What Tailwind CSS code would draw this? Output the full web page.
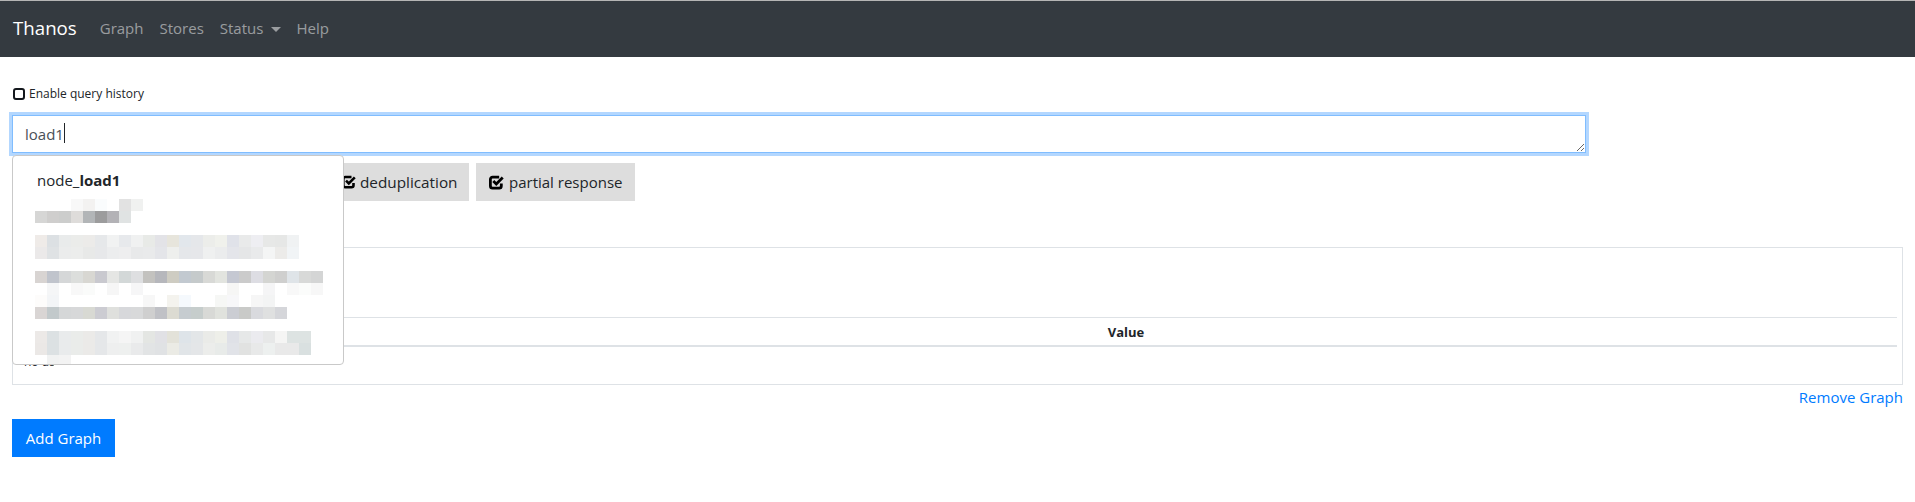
<!DOCTYPE html>
<html lang="en">

<head>
   <meta charset="UTF-8">
   <title>Thanos</title>
   <script src="https://cdn.jsdelivr.net/npm/@tailwindcss/browser@4"></script>
</head>

<body class="bg-white text-[#212529] font-['Open_Sans','Noto_Sans',sans-serif] overflow-hidden">
   <!-- Navbar -->
   <nav class="h-[57px] border-t border-[#b5b5b5] bg-[#343a40] flex items-center pl-[13px] pb-[1px]">
      <a class="text-white text-[18.7px] mr-[23px]">Thanos</a>
      <a class="text-white/50 text-[15px] mr-[16px]">Graph</a>
      <a class="text-white/50 text-[15px] mr-[16px]">Stores</a>
      <a class="text-white/50 text-[15px] mr-[15px] flex items-center">Status
         <span class="ml-[8px] mt-[1px] border-x-[5px] border-x-transparent border-t-[5px] border-t-white/50"></span>
      </a>
      <a class="text-white/50 text-[15px]">Help</a>
   </nav>

   <div class="pl-[12px] pr-[13px]">
      <!-- Query history -->
      <label class="h-[58px] flex items-center pt-[16px] pl-[1px] text-[12px] leading-none">
         <span class="w-[12px] h-[12px] rounded-[3px] border-2 border-[#14181d] mr-[4px]"></span>
         Enable query history
      </label>

      <!-- Expression -->
      <div class="relative w-[1574px]">
         <textarea rows="1"
            class="block w-full h-[38px] resize-y border border-[#80bdff] ring-[3px] ring-[#b3d7ff] outline-none px-[12px] py-[6px] text-[15px] leading-[24px] text-[#495057]">load1</textarea>
         <span class="absolute left-[52px] top-[8px] w-px h-[20px] bg-[#212529]"></span>

         <!-- Autocomplete -->
         <div class="absolute left-0 top-[40px] z-10 w-[332px] h-[210px] bg-white border border-[#c9c9c9] rounded-[4px] pt-[12px] overflow-hidden">
            <p class="pl-[24px] text-[15px] leading-[24px] h-[31px]">node_<b>load1</b></p>

            <div class="pl-[22px]">
               <div class="flex h-[12px] ml-[24px]">
                  <i class="w-[12px]"></i><i class="w-[12px] bg-[#f8f8f8]"></i><i class="w-[12px] bg-[#f3f2f1]"></i><i class="w-[12px] bg-[#fafcfd]"></i><i class="w-[12px]"></i><i class="w-[12px] bg-[#e2e2e2]"></i><i class="w-[12px] bg-[#f0f1f0]"></i>
               </div>
               <div class="flex h-[12px]">
                  <i class="w-[12px] bg-[#d6d6d5]"></i><i class="w-[12px] bg-[#cfcecd]"></i><i class="w-[12px] bg-[#cccdcc]"></i><i class="w-[12px] bg-[#dedcda]"></i><i class="w-[12px] bg-[#b2b5b7]"></i><i class="w-[12px] bg-[#9c9c9d]"></i><i class="w-[12px] bg-[#b3b2b6]"></i><i class="w-[12px] bg-[#e0e3e3]"></i>
               </div>

               <div class="flex h-[12px] mt-[12px]">
                  <i class="w-[12px] bg-[#efebe8]"></i><i class="w-[12px] bg-[#dce0e3]"></i><i class="w-[12px] bg-[#e9ebeb]"></i><i class="w-[12px] bg-[#ebecea]"></i><i class="w-[12px] bg-[#ecebe9]"></i><i class="w-[12px] bg-[#e6e8ea]"></i><i class="w-[12px] bg-[#f1f2f2]"></i><i class="w-[12px] bg-[#e7e9ec]"></i><i class="w-[12px] bg-[#f0f1f1]"></i><i class="w-[12px] bg-[#e8eae7]"></i><i class="w-[12px] bg-[#e3e3e7]"></i><i class="w-[12px] bg-[#e7e5dc]"></i><i class="w-[12px] bg-[#e2e7ec]"></i><i class="w-[12px] bg-[#e5e7ea]"></i><i class="w-[12px] bg-[#ecedea]"></i><i class="w-[12px] bg-[#f0f1ec]"></i><i class="w-[12px] bg-[#e0e2e9]"></i><i class="w-[12px] bg-[#e9eaea]"></i><i class="w-[12px] bg-[#eeeef2]"></i><i class="w-[12px] bg-[#e7e8e7]"></i><i class="w-[12px] bg-[#e6e7e6]"></i><i class="w-[12px] bg-[#f0f2f3]"></i>
               </div>
               <div class="flex h-[12px]">
                  <i class="w-[12px] bg-[#ebe9e9]"></i><i class="w-[12px] bg-[#dfe2e4]"></i><i class="w-[12px] bg-[#ebecec]"></i><i class="w-[12px] bg-[#ecedec]"></i><i class="w-[12px] bg-[#e8e9e8]"></i><i class="w-[12px] bg-[#e7e8ea]"></i><i class="w-[12px] bg-[#ecedee]"></i><i class="w-[12px] bg-[#eeeeef]"></i><i class="w-[12px] bg-[#e8e9ea]"></i><i class="w-[12px] bg-[#e9eaeb]"></i><i class="w-[12px] bg-[#e4e5e9]"></i><i class="w-[12px] bg-[#eeefed]"></i><i class="w-[12px] bg-[#e5e7ea]"></i><i class="w-[12px] bg-[#e6e7ea]"></i><i class="w-[12px] bg-[#eff0f0]"></i><i class="w-[12px] bg-[#ebeced]"></i><i class="w-[12px] bg-[#e4e5ea]"></i><i class="w-[12px] bg-[#e5e6e7]"></i><i class="w-[12px] bg-[#e9eaeb]"></i><i class="w-[12px] bg-[#f4f5f5]"></i><i class="w-[12px] bg-[#ecebe9]"></i><i class="w-[12px] bg-[#f1f4f6]"></i>
               </div>

               <div class="flex h-[12px] mt-[12px]">
                  <i class="w-[12px] bg-[#d8d4d2]"></i><i class="w-[12px] bg-[#c0c4cc]"></i><i class="w-[12px] bg-[#d5d7d8]"></i><i class="w-[12px] bg-[#dcdedc]"></i><i class="w-[12px] bg-[#d8d7d2]"></i><i class="w-[12px] bg-[#c9c9cf]"></i><i class="w-[12px] bg-[#e5e6e4]"></i><i class="w-[12px] bg-[#d3d8d8]"></i><i class="w-[12px] bg-[#dedfe1]"></i><i class="w-[12px] bg-[#c3c2bf]"></i><i class="w-[12px] bg-[#b6b7bc]"></i><i class="w-[12px] bg-[#ceccc2]"></i><i class="w-[12px] bg-[#c2c9d0]"></i><i class="w-[12px] bg-[#c5cacb]"></i><i class="w-[12px] bg-[#d8d9d6]"></i><i class="w-[12px] bg-[#e2e4df]"></i><i class="w-[12px] bg-[#c5c8d2]"></i><i class="w-[12px] bg-[#cbcbcb]"></i><i class="w-[12px] bg-[#dddde3]"></i><i class="w-[12px] bg-[#d4d5d2]"></i><i class="w-[12px] bg-[#cfcfce]"></i><i class="w-[12px] bg-[#dfe4e8]"></i><i class="w-[12px] bg-[#d8d9d8]"></i><i class="w-[12px] bg-[#d4d5d5]"></i>
               </div>
               <div class="flex h-[12px]">
                  <i class="w-[12px]"></i><i class="w-[12px] bg-[#f5f6f7]"></i><i class="w-[12px]"></i><i class="w-[12px] bg-[#f8f8f8]"></i><i class="w-[12px] bg-[#fafbfa]"></i><i class="w-[12px]"></i><i class="w-[12px] bg-[#f6f6f6]"></i><i class="w-[12px]"></i><i class="w-[12px] bg-[#f6f6f7]"></i><i class="w-[84px]"></i><i class="w-[12px] bg-[#f6f6f5]"></i><i class="w-[24px]"></i><i class="w-[12px] bg-[#f5f5f6]"></i><i class="w-[12px]"></i><i class="w-[12px] bg-[#f8f8f8]"></i><i class="w-[12px] bg-[#fbfcfb]"></i><i class="w-[12px] bg-[#f7f7f7]"></i>
               </div>
               <div class="flex h-[12px]">
                  <i class="w-[12px] bg-[#fdfcfb]"></i><i class="w-[12px] bg-[#f3f5f7]"></i><i class="w-[84px]"></i><i class="w-[12px] bg-[#f7f7f7]"></i><i class="w-[12px]"></i><i class="w-[12px] bg-[#f4f3ee]"></i><i class="w-[12px] bg-[#f5f9fd]"></i><i class="w-[24px]"></i><i class="w-[12px] bg-[#f6f7f5]"></i><i class="w-[12px] bg-[#f7f7f9]"></i><i class="w-[12px]"></i><i class="w-[12px] bg-[#f6f6f6]"></i><i class="w-[12px] bg-[#f3f4f4]"></i>
               </div>
               <div class="flex h-[12px]">
                  <i class="w-[12px] bg-[#d9d5d4]"></i><i class="w-[12px] bg-[#c2c9cb]"></i><i class="w-[12px] bg-[#d5d7d8]"></i><i class="w-[12px] bg-[#d7d8d9]"></i><i class="w-[12px] bg-[#d8d9d3]"></i><i class="w-[12px] bg-[#ccccd2]"></i><i class="w-[12px] bg-[#dfe0dd]"></i><i class="w-[12px] bg-[#d7d8db]"></i><i class="w-[12px] bg-[#d8d9da]"></i><i class="w-[12px] bg-[#cfcfcf]"></i><i class="w-[12px] bg-[#c0c1c6]"></i><i class="w-[12px] bg-[#dcdbd2]"></i><i class="w-[12px] bg-[#c6ccd0]"></i><i class="w-[12px] bg-[#c6cdcc]"></i><i class="w-[12px] bg-[#d8d9d6]"></i><i class="w-[12px] bg-[#e0e2dd]"></i><i class="w-[12px] bg-[#cbcdd3]"></i><i class="w-[12px] bg-[#c9cac8]"></i><i class="w-[12px] bg-[#d9dade]"></i><i class="w-[12px] bg-[#dfe0e0]"></i><i class="w-[12px] bg-[#d5d6da]"></i>
               </div>

               <div class="flex h-[12px] mt-[12px]">
                  <i class="w-[12px] bg-[#ece9e7]"></i><i class="w-[12px] bg-[#dce1e3]"></i><i class="w-[12px] bg-[#e9ebec]"></i><i class="w-[12px] bg-[#eaecea]"></i><i class="w-[12px] bg-[#ebeae8]"></i><i class="w-[12px] bg-[#e5e7e9]"></i><i class="w-[12px] bg-[#f1f2f2]"></i><i class="w-[12px] bg-[#f5f5f5]"></i><i class="w-[12px] bg-[#f0f1f1]"></i><i class="w-[12px] bg-[#e4e6e3]"></i><i class="w-[12px] bg-[#e1e1e5]"></i><i class="w-[12px] bg-[#e3e2d9]"></i><i class="w-[12px] bg-[#dee4e9]"></i><i class="w-[12px] bg-[#e3e6e8]"></i><i class="w-[12px] bg-[#eaebe8]"></i><i class="w-[12px] bg-[#eeefe9]"></i><i class="w-[12px] bg-[#dfe1e7]"></i><i class="w-[12px] bg-[#e6e8e8]"></i><i class="w-[12px] bg-[#ebebef]"></i><i class="w-[12px] bg-[#e7e8e8]"></i><i class="w-[12px] bg-[#f5f5f4]"></i><i class="w-[12px] bg-[#dde3e2]"></i><i class="w-[12px] bg-[#dde3e2]"></i>
               </div>
               <div class="flex h-[12px]">
                  <i class="w-[12px] bg-[#ebe8e6]"></i><i class="w-[12px] bg-[#dce1e3]"></i><i class="w-[12px] bg-[#e9ebec]"></i><i class="w-[12px] bg-[#eaecea]"></i><i class="w-[12px] bg-[#ebeae8]"></i><i class="w-[12px] bg-[#e5e7e9]"></i><i class="w-[12px] bg-[#eeefef]"></i><i class="w-[12px] bg-[#eef0ef]"></i><i class="w-[12px] bg-[#e9eaeb]"></i><i class="w-[12px] bg-[#e2e4e5]"></i><i class="w-[12px] bg-[#e0e2e4]"></i><i class="w-[12px] bg-[#ebebe5]"></i><i class="w-[12px] bg-[#e1e5e8]"></i><i class="w-[12px] bg-[#e4e6e8]"></i><i class="w-[12px] bg-[#ecedeb]"></i><i class="w-[12px] bg-[#e8ebe9]"></i><i class="w-[12px] bg-[#e1e3e8]"></i><i class="w-[12px] bg-[#e1e2e1]"></i><i class="w-[12px] bg-[#e8e9e9]"></i><i class="w-[12px] bg-[#edf0ef]"></i><i class="w-[12px] bg-[#e9e9e9]"></i><i class="w-[12px] bg-[#e9e9e9]"></i><i class="w-[12px] bg-[#d9e0e0]"></i>
               </div>
               <div class="flex h-[10px] ml-[12px]">
                  <i class="w-[12px] bg-[#f1f2f2]"></i><i class="w-[12px] bg-[#f3f3f3]"></i>
               </div>
            </div>
         </div>
      </div>

      <!-- Execute row -->
      <div class="flex gap-[7px] mt-[10px] h-[38px]">
         <button class="w-[317px] bg-[#007bff] text-white text-[15px]">Execute</button>
         <button class="w-[133px] bg-[#ddd] text-[15.3px] flex items-center pl-[6px] whitespace-nowrap">
            <svg class="w-[14px] h-[14px] mr-[4px] shrink-0" viewBox="0 0 14 14" fill="none" stroke="#000" stroke-width="2.6">
               <path d="M11.5 8v2.2a2 2 0 0 1-2 2H3.3a2 2 0 0 1-2-2V4a2 2 0 0 1 2-2h6.2" />
               <path d="M4 5.6l2.8 2.8 6-6" />
            </svg>deduplication</button>
         <button class="w-[159px] bg-[#ddd] text-[15px] flex items-center pl-[13px] whitespace-nowrap">
            <svg class="w-[15px] h-[15px] mr-[5px] shrink-0" viewBox="0 0 14 14" fill="none" stroke="#000" stroke-width="2.6">
               <path d="M11.5 8v2.2a2 2 0 0 1-2 2H3.3a2 2 0 0 1-2-2V4a2 2 0 0 1 2-2h6.2" />
               <path d="M4 5.6l2.8 2.8 6-6" />
            </svg>partial response</button>
      </div>

      <!-- Graph panel -->
      <div class="relative mt-[46px] w-[1891px] h-[138px] border border-[#dee2e6] px-[5px] pt-[69px]">
         <div class="h-[30px] border-t border-b-2 border-[#dee2e6] grid grid-cols-[337px_1fr] items-center pt-[2px] text-[13px] font-bold">
            <span>Element</span>
            <span class="text-center">Value</span>
         </div>
         <p class="pl-[6px] pt-[6px] text-[12px] leading-[18px]">no data</p>
         <span class="absolute left-[41px] top-[112px] w-[24px] h-[12px] bg-white"></span>
      </div>
      <div class="w-[1891px] text-right text-[#007bff] text-[15px] leading-[24px]">Remove Graph</div>

      <button class="mt-[10px] w-[103px] h-[38px] bg-[#007bff] text-white text-[15px]">Add Graph</button>
   </div>
</body>

</html>
